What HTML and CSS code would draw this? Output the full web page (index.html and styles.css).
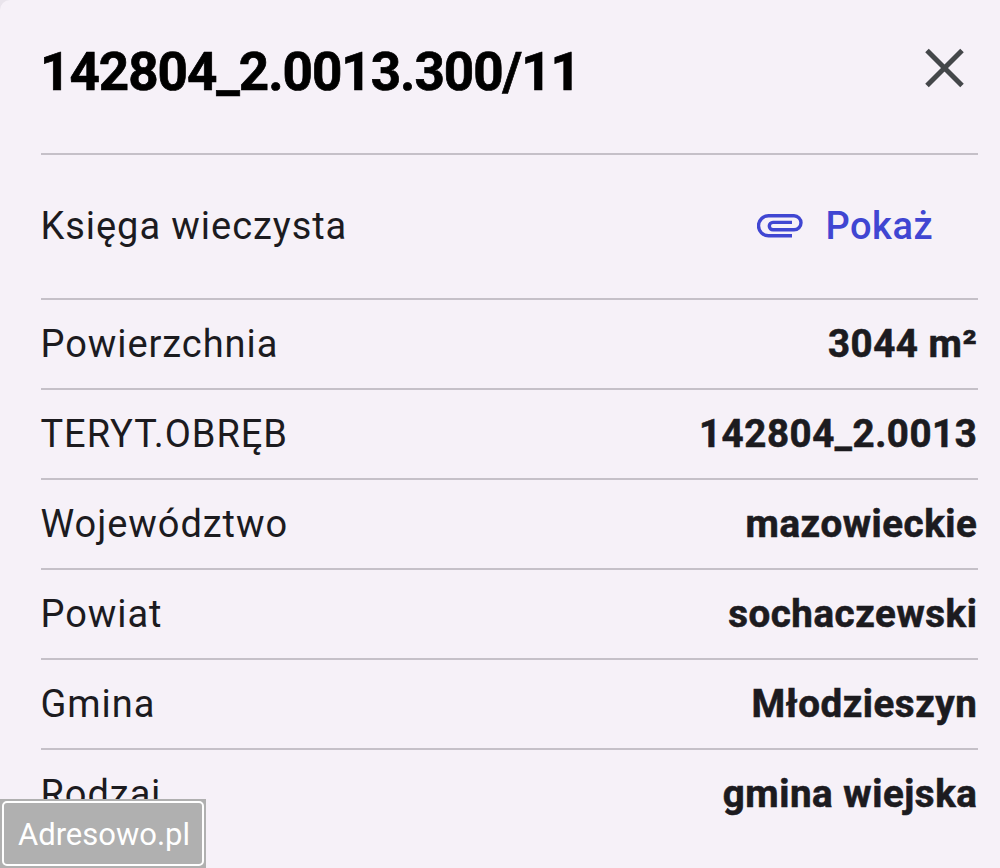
FILE: index.html
```html
<!DOCTYPE html>
<html lang="pl">
<head>
    <meta charset="UTF-8">
    <meta name="viewport" content="width=device-width, initial-scale=1.0">
    <title>Działka 142804_2.0013.300/11</title>
    <link rel="stylesheet" href="styles.css">
</head>
<body>
    <div class="panel">
        <div class="header">
            <h1>142804_2.0013.300/11</h1>
            <button type="button" class="close" aria-label="Zamknij">
                <svg width="40" height="40" viewBox="0 0 40 40">
                    <path d="M2 2.5 L37 37.5 M37 2.5 L2 37.5" fill="none" stroke="#44474a" stroke-width="5"/>
                </svg>
            </button>
        </div>

        <div class="row row-register">
            <span class="label">Księga wieczysta</span>
            <a href="#" class="show">
                <svg width="46" height="24" viewBox="0 0 46 24">
                    <path d="M35 21.8 H11.5 A10 10 0 0 1 11.5 1.8 H37 A7 7 0 0 1 37 15.8 H16 A3.7 3.7 0 0 1 16 8.4 H35" fill="none" stroke="#4046d2" stroke-width="3.4"/>
                </svg>
                <span>Pokaż</span>
            </a>
        </div>
        <div class="row">
            <span class="label">Powierzchnia</span>
            <span class="value">3044 m²</span>
        </div>
        <div class="row">
            <span class="label">TERYT.OBRĘB</span>
            <span class="value">142804_2.0013</span>
        </div>
        <div class="row">
            <span class="label">Województwo</span>
            <span class="value">mazowieckie</span>
        </div>
        <div class="row">
            <span class="label">Powiat</span>
            <span class="value">sochaczewski</span>
        </div>
        <div class="row">
            <span class="label">Gmina</span>
            <span class="value">Młodzieszyn</span>
        </div>
        <div class="row">
            <span class="label">Rodzaj</span>
            <span class="value">gmina wiejska</span>
        </div>
    </div>

    <div class="watermark"><span>Adresowo.pl</span></div>
</body>
</html>
```
FILE: styles.css
```css
body {
    margin: 0;
    background-color: #e9e4ec;
    font-family: Roboto, sans-serif;
    color: #1c1b1f;
}
.panel {
    box-sizing: border-box;
    height: 868px;
    padding: 0 22px 0 41px;
    overflow: hidden;
    background-color: #f6f1f8;
    border-top-left-radius: 10px;
}
.header {
    display: flex;
    justify-content: space-between;
    height: 153px;
}
h1 {
    margin: 42px 0 0 -1px;
    font-size: 53px;
    line-height: 60px;
    font-weight: bold;
    letter-spacing: -1.03px;
    color: #000;
    -webkit-text-stroke: 0.7px #000;
}
.close {
    width: 40px;
    height: 40px;
    margin: 48px 13px 0 0;
    padding: 0;
    border: none;
    background: none;
    cursor: pointer;
}
.close svg {
    display: block;
}
.row {
    display: flex;
    justify-content: space-between;
    align-items: center;
    box-sizing: border-box;
    height: 90px;
    border-top: 2px solid #c5c0c8;
    font-size: 38px;
    line-height: 46px;
    white-space: nowrap;
}
.row-register {
    height: 145px;
    padding-bottom: 2px;
}
.label {
    margin-left: -0.5px;
    letter-spacing: 0.94px;
}
.value {
    margin-right: 0.6px;
    font-weight: bold;
    font-size: 38.5px;
    letter-spacing: 0.55px;
    -webkit-text-stroke: 0.6px #1c1b1f;
}
.show {
    display: flex;
    align-items: center;
    gap: 23px;
    margin-right: 45px;
    color: #4046d2;
    font-weight: 500;
    letter-spacing: 0.5px;
    text-decoration: none;
}
.watermark {
    position: absolute;
    left: 0;
    bottom: 0;
    box-sizing: border-box;
    width: 206px;
    height: 69px;
    padding: 2px;
    background-color: #b0b0b0;
    color: #fff;
    font-size: 31px;
    line-height: 63px;
    text-align: center;
}
.watermark span {
    display: block;
    box-sizing: border-box;
    height: 65px;
    padding-left: 2px;
    border: 2px solid #fff;
    border-radius: 5px;
}
```
